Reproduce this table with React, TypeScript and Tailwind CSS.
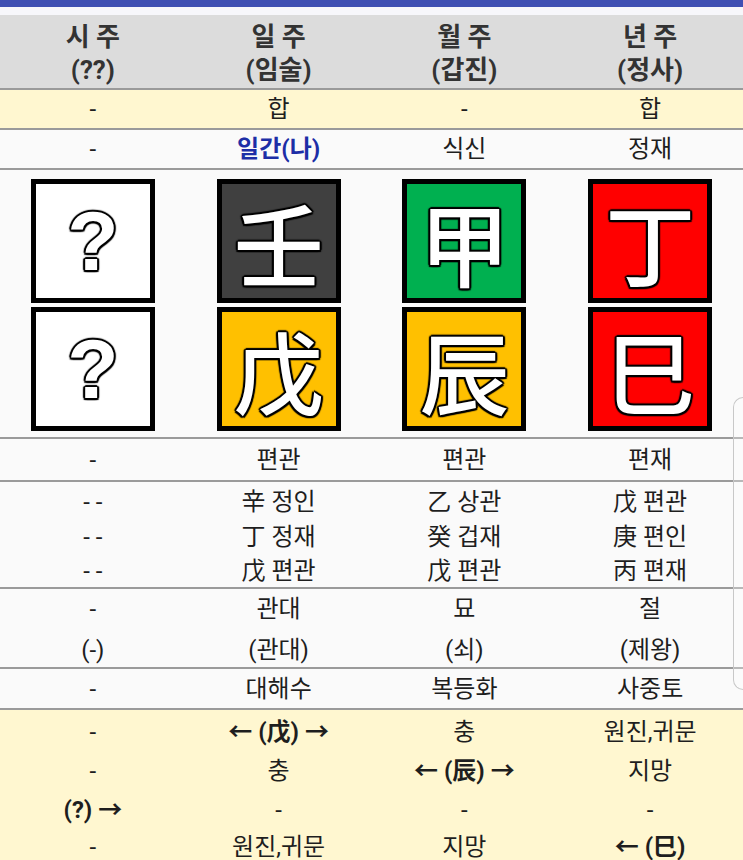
import React from "react";

const FONT = { fontFamily: 'Roboto, "Noto Sans CJK KR", "Noto Sans", sans-serif' };

const cells4 = (vals: React.ReactNode[], cls = "") =>
  vals.map((v, i) => (
    <div key={i} className={"flex items-center justify-center " + cls}>
      {v}
    </div>
  ));

function Box({ ch, bg, q }: { ch: string; bg: string; q?: boolean }) {
  return (
    <div
      className={
        "w-[124px] h-[124px] border-[5px] border-black flex items-center justify-center " + bg
      }
    >
      <span
        className={
          "text-white leading-none [text-shadow:2px_0_1px_#000,-2px_0_1px_#000,0_2px_1px_#000,0_-2px_1px_#000,1.5px_1.5px_1px_#000,-1.5px_1.5px_1px_#000,1.5px_-1.5px_1px_#000,-1.5px_-1.5px_1px_#000,0_0_3px_#000] " +
          (q ? "text-[84px] font-bold" : "text-[90px] font-medium")
        }
        style={
          q
            ? { fontFamily: '"Liberation Sans", Arial, sans-serif' }
            : { fontFamily: '"Noto Sans CJK KR", "Noto Sans CJK SC", sans-serif' }
        }
      >
        {ch}
      </span>
    </div>
  );
}

export default function App() {
  const line = "border-b-2 border-[#9a9a9a]";
  return (
    <div className="relative w-[743px] h-[860px] overflow-hidden bg-[#fafafa] text-[#1e1e1e]" style={FONT}>
      <div className="h-[7px] bg-[#3f4fb3]" />
      <div className="h-[8px] bg-[#f7f7fb]" />

      {/* header */}
      <div className={"grid grid-cols-4 h-[75px] bg-[#dcdcdc] text-[26px] font-bold text-[#333] " + line}>
        {[
          ["시 주", "(??)"],
          ["일 주", "(임술)"],
          ["월 주", "(갑진)"],
          ["년 주", "(정사)"],
        ].map(([a, b], i) => (
          <div key={i} className="flex flex-col items-center justify-center leading-[33px] pt-[4px]">
            <span>{a}</span>
            <span>{b}</span>
          </div>
        ))}
      </div>

      {/* 합 row */}
      <div className={"grid grid-cols-4 h-[40px] bg-[#fff7d0] text-[24px] " + line}>
        {cells4(["-", "합", "-", "합"])}
      </div>

      {/* 십신 row */}
      <div className={"grid grid-cols-4 h-[40px] bg-[#fafafa] text-[24px] " + line}>
        {cells4([
          "-",
          <span className="font-bold text-[#1d2ea6]">일간(나)</span>,
          "식신",
          "정재",
        ])}
      </div>

      {/* pillars */}
      <div className={"grid grid-cols-4 h-[269px] pt-[9px] " + line}>
        <div className="flex flex-col items-center gap-[4px]">
          <Box ch="?" bg="bg-white" q />
          <Box ch="?" bg="bg-white" q />
        </div>
        <div className="flex flex-col items-center gap-[4px]">
          <Box ch="壬" bg="bg-[#404040]" />
          <Box ch="戊" bg="bg-[#ffc000]" />
        </div>
        <div className="flex flex-col items-center gap-[4px]">
          <Box ch="甲" bg="bg-[#00b050]" />
          <Box ch="辰" bg="bg-[#ffc000]" />
        </div>
        <div className="flex flex-col items-center gap-[4px]">
          <Box ch="丁" bg="bg-[#ff0000]" />
          <Box ch="巳" bg="bg-[#ff0000]" />
        </div>
      </div>

      {/* 편관 row */}
      <div className={"grid grid-cols-4 h-[43px] text-[24px] " + line}>
        {cells4(["-", "편관", "편관", "편재"])}
      </div>

      {/* hidden stems */}
      <div className={"grid grid-cols-4 h-[107px] text-[24px] " + line}>
        {[
          ["- -", "- -", "- -"],
          ["辛 정인", "丁 정재", "戊 편관"],
          ["乙 상관", "癸 겁재", "戊 편관"],
          ["戊 편관", "庚 편인", "丙 편재"],
        ].map((col, i) => (
          <div key={i} className="flex flex-col items-center justify-center leading-[34.5px] pt-[3px]">
            {col.map((t, j) => (
              <span key={j}>{t}</span>
            ))}
          </div>
        ))}
      </div>

      {/* 12 stages */}
      <div className={"grid grid-cols-4 h-[80px] text-[24px] " + line}>
        {[
          ["-", "(-)"],
          ["관대", "(관대)"],
          ["묘", "(쇠)"],
          ["절", "(제왕)"],
        ].map(([a, b], i) => (
          <div key={i} className="flex flex-col items-center justify-center leading-[41px]">
            <span>{a}</span>
            <span>{b}</span>
          </div>
        ))}
      </div>

      {/* napeum */}
      <div className={"grid grid-cols-4 h-[41px] text-[24px] " + line}>
        {cells4(["-", "대해수", "복등화", "사중토"])}
      </div>

      {/* relations */}
      <div className="bg-[#fff7d0] pt-[2px] text-[24px] h-[200px]">
        {[
          ["-", <b>← (戊) →</b>, "충", "원진,귀문"],
          ["-", "충", <b>← (辰) →</b>, "지망"],
          [<b>(?) →</b>, "-", "-", "-"],
          ["-", "원진,귀문", "지망", <b>← (巳)</b>],
        ].map((row, i) => (
          <div key={i} className={"grid grid-cols-4 " + (i === 3 ? "h-[36px]" : "h-[39px]")}>
            {cells4(row)}
          </div>
        ))}
      </div>

      {/* edge handle overlay */}
      <div className="absolute right-0 top-[397px] w-[10px] h-[293px] rounded-l-[10px] border border-r-0 border-[#c8c8c8] bg-white/30" />
    </div>
  );
}
